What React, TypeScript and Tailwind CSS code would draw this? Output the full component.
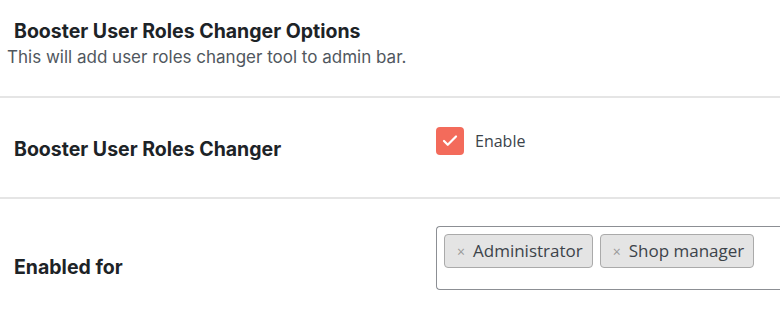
import { Check } from "lucide-react";

const head = { fontFamily: "Inter, 'Liberation Sans', sans-serif" };
const body = { fontFamily: "'Open Sans', 'Noto Sans', sans-serif" };

function Tag({ label }: { label: string }) {
  return (
    <span className="flex h-[34px] items-center gap-2 rounded-[4px] border border-[#aaaaaa] bg-[#e4e4e4] pl-3 pr-[9px] text-[17px] text-[#3c434a]">
      <span className="text-[14px] text-[#999999]">×</span>
      {label}
    </span>
  );
}

export default function App() {
  return (
    <div className="h-[310px] w-[780px] overflow-hidden bg-white">
      <div className="h-[96px] pt-[19px]">
        <h2 className="pl-[14px] text-[19.5px] font-bold leading-[24px] text-[#1d2327]" style={head}>
          Booster User Roles Changer Options
        </h2>
        <p className="pl-[7px] text-[17px] leading-[28px] text-[#50575e]" style={head}>
          This will add user roles changer tool to admin bar.
        </p>
      </div>
      <div className="flex h-[101px] border-t-2 border-[#e5e5e5]">
        <div className="w-[436px] pl-[14px] pt-[38px] text-[19.5px] font-bold leading-[26px] text-[#1d2327]" style={head}>
          Booster User Roles Changer
        </div>
        <div className="flex items-start gap-[11px] pt-[29px]" style={body}>
          <span className="flex h-[28px] w-[28px] items-center justify-center rounded-[4px] bg-[#f36b5b]">
            <Check className="h-[18px] w-[18px] text-white" strokeWidth={3} />
          </span>
          <span className="text-[16px] leading-[28px] text-[#3c434a]">Enable</span>
        </div>
      </div>
      <div className="flex border-t-2 border-[#e5e5e5]">
        <div className="w-[436px] pl-[14px] pt-[55px] text-[19.5px] font-bold leading-[26px] text-[#1d2327]" style={head}>
          Enabled for
        </div>
        <div className="flex-1 pt-[27px]" style={body}>
          <div className="flex h-[64px] items-start gap-[7px] rounded-l-[4px] border border-[#8c8f94] border-r-0 pl-[7px] pt-[7px]">
            <Tag label="Administrator" />
            <Tag label="Shop manager" />
          </div>
        </div>
      </div>
    </div>
  );
}
